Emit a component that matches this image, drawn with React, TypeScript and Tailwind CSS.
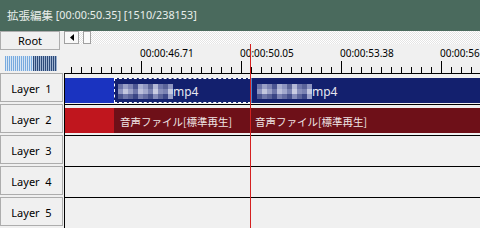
import React from "react";

const mosaic: string[][] = [
  ["#6b73a8", "#9aa0c6", "#7d84b4", "#4b5592", "#a8aed0", "#8e95c0", "#5d6699", "#b3b8d6", "#7078ac", "#5a6399", "#8f96c2"],
  ["#8b92bf", "#c2c6de", "#9ca2c8", "#6e76aa", "#bcc0dc", "#a3a9cd", "#7a82b2", "#c9cce2", "#8990bc", "#7a82b2", "#c4c8e0"],
  ["#4a548f", "#6f77aa", "#5a6399", "#3a4585", "#7b82b2", "#646ca2", "#46508c", "#858cba", "#5c659b", "#3d4888", "#9aa0c8"],
];

function Mosaic() {
  return (
    <div className="flex flex-col w-[55px] h-[15px] shrink-0">
      {mosaic.map((row, i) => (
        <div key={i} className="flex h-[5px]">
          {row.map((c, j) => (
            <div key={j} className="w-[5px] h-[5px]" style={{ backgroundColor: c }} />
          ))}
        </div>
      ))}
    </div>
  );
}

function LayerButton({ n }: { n: number }) {
  return (
    <div className="h-[29px] mb-[2px] w-[63px] border border-[#adadad] bg-[#f0f0f0] flex items-center justify-center text-[11px] text-black whitespace-pre leading-none pt-[2px]">
      {`Layer  ${n}`}
    </div>
  );
}

const majors = [141, 241, 341, 441];
const labels = ["00:00:46.71", "00:00:50.05", "00:00:53.38", "00:00:56.72"];

function Ruler() {
  const minors: number[] = [];
  for (let x = 71; x < 480; x += 10) if (!majors.includes(x)) minors.push(x);
  return (
    <div className="relative h-[29px] overflow-hidden">
      <svg width="416" height="29" className="absolute left-0 top-0">
        {minors.map((x) => (
          <line key={x} x1={x - 64 + 0.5} x2={x - 64 + 0.5} y1={23} y2={29} stroke="#000" strokeWidth={1} />
        ))}
        {majors.map((x) => (
          <line key={x} x1={x - 64 + 0.5} x2={x - 64 + 0.5} y1={17} y2={29} stroke="#000" strokeWidth={1} />
        ))}
      </svg>
      {majors.map((x, i) => (
        <span
          key={x}
          className="absolute top-[4px] text-[10px] leading-[10px] text-black whitespace-nowrap"
          style={{ left: x - 64 - 1 }}
        >
          {labels[i]}
        </span>
      ))}
    </div>
  );
}

export default function App() {
  return (
    <div className="relative w-[480px] h-[228px] overflow-hidden bg-[#f0f0f0] font-['Noto_Sans',sans-serif]">
      <div className="h-[31px] bg-[#4a6a5d] flex items-center pl-[7px] text-[#e8eeeb] whitespace-pre">
        <span className="font-['Noto_Sans_CJK_JP',sans-serif] text-[11.5px]">拡張編集</span>
        <span className="text-[10.8px]"> [00:00:50.35] [1510/238153]</span>
      </div>
      <div className="flex">
        <div className="w-[64px] shrink-0 flex flex-col">
          <div className="h-[42px] flex flex-col">
            <div className="w-[60px] h-[19px] border border-[#adadad] bg-[#f0f0f0] flex items-center justify-center text-[11px] leading-none text-black">
              Root
            </div>
            <div className="ml-[5px] mt-[6px] w-[52px] h-[15px] flex">
              <div className="w-[28px] bg-[repeating-linear-gradient(90deg,#78aade_0px,#78aade_1px,#d6e5f4_1px,#d6e5f4_2px)]" />
              <div className="flex-1 bg-[repeating-linear-gradient(90deg,#2c4a7a_0px,#2c4a7a_1px,#9fb3d0_1px,#9fb3d0_2px)]" />
            </div>
          </div>
          {[1, 2, 3, 4, 5].map((n) => (
            <LayerButton key={n} n={n} />
          ))}
        </div>
        <div className="flex-1 flex flex-col">
          <div className="h-[13px] flex bg-[repeating-conic-gradient(#e4e4e4_0%_25%,#ffffff_0%_50%)] bg-[length:2px_2px]">
            <div className="w-[15px] h-[13px] border border-[#a0a0a0] bg-[#f8f8f8] flex items-center justify-center">
              <svg width="4" height="7" viewBox="0 0 4 7">
                <polygon points="4,0 4,7 0,3.5" fill="#000" />
              </svg>
            </div>
            <div className="w-[4px]" />
            <div className="w-[8px] h-[13px] border border-[#a0a0a0] bg-[#fafafa]" />
          </div>
          <Ruler />
          {/* Layer 1 */}
          <div className="h-[31px] border-t border-l border-black pt-[4px]">
            <div className="h-[25px] flex">
              <div className="w-[49px] bg-[#1a33c0]" />
              <div className="w-[137px] bg-[#13206e] border border-dashed border-white flex items-center pl-[3px] pt-[2px]">
                <Mosaic />
                <span className="text-[12px] leading-none text-[#e8e8f0]">mp4</span>
              </div>
              <div className="flex-1 bg-[#13206e] flex items-center pl-[5px] pt-[2px] border-l border-[#4f86c8]">
                <Mosaic />
                <span className="text-[12px] leading-none text-[#e8e8f0]">mp4</span>
              </div>
            </div>
          </div>
          {/* Layer 2 */}
          <div className="h-[31px] border-t border-l border-black pt-[3px]">
            <div className="h-[25px] flex">
              <div className="w-[49px] bg-[#c0161e]" />
              <div className="w-[136px] bg-[#6e1018] flex items-center pl-[6px] pt-[3px] font-['Noto_Sans_CJK_JP',sans-serif] text-[10.5px] leading-none text-[#f0e6e6] whitespace-nowrap overflow-hidden">
                音声ファイル[標準再生]
              </div>
              <div className="flex-1 bg-[#6e1018] flex items-center pl-[5px] pt-[3px] font-['Noto_Sans_CJK_JP',sans-serif] text-[10.5px] leading-none text-[#f0e6e6] whitespace-nowrap overflow-hidden">
                音声ファイル[標準再生]
              </div>
            </div>
          </div>
          <div className="h-[31px] border-t border-l border-black" />
          <div className="h-[31px] border-t border-l border-black" />
          <div className="h-[31px] border-t border-l border-black" />
        </div>
      </div>
      <div className="absolute left-[250px] top-[44px] bottom-0 w-px bg-[#d42020]" />
    </div>
  );
}
